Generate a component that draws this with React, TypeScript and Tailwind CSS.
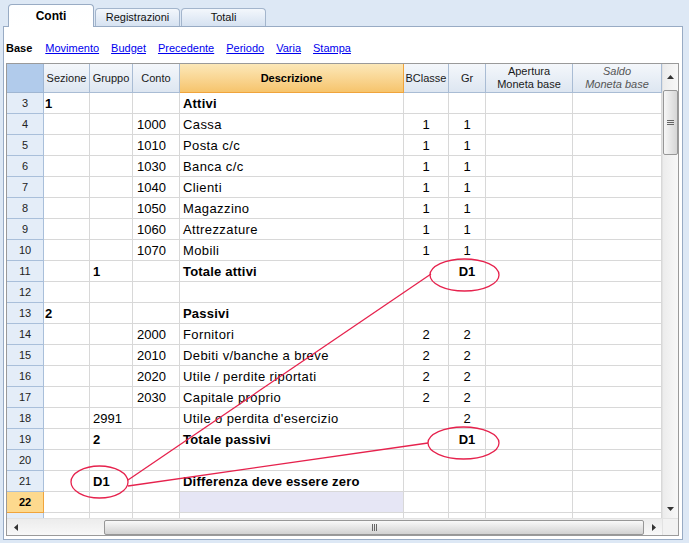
import React from 'react';

type Row = {
  n: number;
  sez?: string;
  gru?: string;
  con?: string;
  desc?: string;
  bcl?: string;
  gr?: string;
  bold?: boolean;
  gruBold?: boolean;
  grBold?: boolean;
};

const ROWS: Row[] = [
  { n: 3, sez: '1', desc: 'Attivi', bold: true },
  { n: 4, con: '1000', desc: 'Cassa', bcl: '1', gr: '1' },
  { n: 5, con: '1010', desc: 'Posta c/c', bcl: '1', gr: '1' },
  { n: 6, con: '1030', desc: 'Banca c/c', bcl: '1', gr: '1' },
  { n: 7, con: '1040', desc: 'Clienti', bcl: '1', gr: '1' },
  { n: 8, con: '1050', desc: 'Magazzino', bcl: '1', gr: '1' },
  { n: 9, con: '1060', desc: 'Attrezzature', bcl: '1', gr: '1' },
  { n: 10, con: '1070', desc: 'Mobili', bcl: '1', gr: '1' },
  { n: 11, gru: '1', desc: 'Totale attivi', gr: 'D1', bold: true, gruBold: true, grBold: true },
  { n: 12 },
  { n: 13, sez: '2', desc: 'Passivi', bold: true },
  { n: 14, con: '2000', desc: 'Fornitori', bcl: '2', gr: '2' },
  { n: 15, con: '2010', desc: 'Debiti v/banche a breve', bcl: '2', gr: '2' },
  { n: 16, con: '2020', desc: 'Utile / perdite riportati', bcl: '2', gr: '2' },
  { n: 17, con: '2030', desc: 'Capitale proprio', bcl: '2', gr: '2' },
  { n: 18, gru: '2991', desc: "Utile o perdita d'esercizio", gr: '2' },
  { n: 19, gru: '2', desc: 'Totale passivi', gr: 'D1', bold: true, gruBold: true, grBold: true },
  { n: 20 },
  { n: 21, gru: 'D1', desc: 'Differenza deve essere zero', bold: true, gruBold: true },
  { n: 22 },
];

const COLS = 'grid grid-cols-[37px_46px_43px_47px_224px_45px_37px_87px_89px]';
const cell = 'border-r border-b border-[#d8d8d8] flex items-center h-[21px] pt-px text-[13px] text-black';

function Tab({ label, active }: { label: string; active?: boolean }) {
  if (active) {
    return (
      <div className="relative z-10 -mb-px w-[86px] h-[23px] rounded-t-[4px] border border-b-0 border-[#98abc4] bg-gradient-to-b from-[#fdfeff] to-white flex items-center justify-center text-[12px] font-bold text-black pb-px">
        {label}
      </div>
    );
  }
  return (
    <div className="w-[85px] h-[18px] rounded-t-[4px] border border-b-0 border-[#a3b5cc] bg-gradient-to-b from-[#f3f7fc] to-[#d6e2f1] flex items-center justify-center text-[11px] text-[#111]">
      {label}
    </div>
  );
}

function HeadCell({ children, className = '' }: { children?: React.ReactNode; className?: string }) {
  return (
    <div
      className={`h-[29px] border-r border-b border-[#a9bcd4] bg-gradient-to-b from-[#f4f7fb] to-[#dde6f1] flex flex-col items-center justify-center text-[11px] leading-[13px] text-[#1a1a1a] ${className}`}
    >
      {children}
    </div>
  );
}

export default function App() {
  return (
    <div className="relative w-[689px] h-[543px] overflow-hidden bg-[#dde8f5] font-['Liberation_Sans',Arial,sans-serif]">
      {/* Tabs */}
      <div className="flex items-end gap-[1px] h-[26px] pl-[8px]">
        <Tab label="Conti" active />
        <Tab label="Registrazioni" />
        <Tab label="Totali" />
      </div>

      {/* Panel */}
      <div className="ml-[3px] w-[680px] h-[514px] border border-[#98abc4] bg-white">
        {/* Link row */}
        <div className="h-[36px] flex items-center gap-3 pl-[2px] pt-[6px] text-[11px]">
          <span className="font-bold text-black mr-px">Base</span>
          {['Movimento', 'Budget', 'Precedente', 'Periodo', 'Varia', 'Stampa'].map((l) => (
            <span key={l} className="text-[#0000ee] underline">
              {l}
            </span>
          ))}
        </div>

        {/* Grid */}
        <div className="ml-[2px] w-[673px] h-[473px] border border-[#9a9a9a] flex flex-col">
          <div className="flex h-[454px]">
            <div className="w-[655px] overflow-hidden">
              {/* Header */}
              <div className={COLS}>
                <div className="h-[29px] border-r border-b border-[#9fb6d2] bg-[#b1cbeb]" />
                <HeadCell>Sezione</HeadCell>
                <HeadCell>Gruppo</HeadCell>
                <HeadCell>Conto</HeadCell>
                <div className="h-[29px] border-r border-b border-[#f0a43c] bg-gradient-to-b from-[#fce8b8] to-[#f6c46c] flex items-center justify-center text-[11px] font-bold text-black">
                  Descrizione
                </div>
                <HeadCell>BClasse</HeadCell>
                <HeadCell>Gr</HeadCell>
                <HeadCell>
                  <span>Apertura</span>
                  <span>Moneta base</span>
                </HeadCell>
                <HeadCell className="italic text-[#555]">
                  <span>Saldo</span>
                  <span>Moneta base</span>
                </HeadCell>
              </div>

              {/* Rows */}
              {ROWS.map((r) => {
                const last = r.n === 22;
                return (
                  <div key={r.n} className={COLS}>
                    <div
                      className={
                        last
                          ? 'h-[21px] border-r border-b border-[#f0a43c] bg-[#fdd98e] flex items-center justify-center text-[11px] font-bold text-black'
                          : 'h-[21px] border-r border-b border-[#a9bfda] bg-[#e4edf8] flex items-center justify-center text-[11px] text-[#222]'
                      }
                    >
                      {r.n}
                    </div>
                    <div className={`${cell} pl-[1px] font-bold`}>{r.sez}</div>
                    <div className={`${cell} pl-[3px] ${r.gruBold ? 'font-bold' : ''}`}>{r.gru}</div>
                    <div className={`${cell} pl-[4px]`}>{r.con}</div>
                    <div
                      className={`${cell} pl-[3px] ${r.bold ? 'font-bold tracking-[0.2px]' : 'tracking-[0.4px]'} ${last ? 'bg-[#e6e6f5]' : ''}`}
                    >
                      {r.desc}
                    </div>
                    <div className={`${cell} justify-center`}>{r.bcl}</div>
                    <div className={`${cell} justify-center ${r.grBold ? 'font-bold' : ''}`}>{r.gr}</div>
                    <div className={cell} />
                    <div className={cell} />
                  </div>
                );
              })}
              {/* partial row */}
              <div className={COLS}>
                <div className="h-[5px] border-r border-[#a9bfda] bg-[#e4edf8]" />
                {Array.from({ length: 8 }).map((_, i) => (
                  <div key={i} className="h-[5px] border-r border-[#d8d8d8]" />
                ))}
              </div>
            </div>

            {/* Vertical scrollbar */}
            <div className="w-[16px] flex flex-col items-center bg-gradient-to-r from-[#ececec] to-[#f8f8f8] border-l border-[#e2e2e2]">
              <div className="h-[26px] flex items-center justify-center">
                <svg width="7" height="4" viewBox="0 0 7 4">
                  <polygon points="0,4 7,4 3.5,0" fill="#333" />
                </svg>
              </div>
              <div className="w-[15px] h-[65px] rounded-[2px] border border-[#979797] bg-gradient-to-r from-[#f7f7f7] to-[#d6d6d6] flex flex-col items-center justify-center gap-[1px]">
                <div className="w-[7px] h-px bg-[#666]" />
                <div className="w-[7px] h-px bg-[#666]" />
                <div className="w-[7px] h-px bg-[#666]" />
              </div>
              <div className="flex-1" />
              <div className="h-[18px] flex items-center justify-center">
                <svg width="7" height="4" viewBox="0 0 7 4">
                  <polygon points="0,0 7,0 3.5,4" fill="#333" />
                </svg>
              </div>
            </div>
          </div>

          {/* Horizontal scrollbar */}
          <div className="flex h-[17px]">
            <div className="w-[655px] flex items-center bg-gradient-to-b from-[#ececec] to-[#f8f8f8] border-t border-[#e2e2e2]">
              <div className="w-[17px] flex items-center justify-center">
                <svg width="4" height="7" viewBox="0 0 4 7">
                  <polygon points="4,0 4,7 0,3.5" fill="#333" />
                </svg>
              </div>
              <div className="w-[80px]" />
              <div className="w-[540px] h-[15px] rounded-[2px] border border-[#979797] bg-gradient-to-b from-[#f9f9f9] to-[#d2d2d2] flex items-center justify-center gap-[1px]">
                <div className="w-px h-[7px] bg-[#666]" />
                <div className="w-px h-[7px] bg-[#666]" />
                <div className="w-px h-[7px] bg-[#666]" />
              </div>
              <div className="flex-1" />
              <div className="w-[17px] flex items-center justify-center">
                <svg width="4" height="7" viewBox="0 0 4 7">
                  <polygon points="0,0 0,7 4,3.5" fill="#333" />
                </svg>
              </div>
            </div>
            <div className="w-[16px] bg-[#f2f2f2] border-t border-l border-[#e2e2e2]" />
          </div>
        </div>
      </div>

      {/* Annotations */}
      <svg className="absolute inset-0 pointer-events-none" width="689" height="543" viewBox="0 0 689 543">
        <g fill="none" stroke="#e6224d" strokeWidth="1.3">
          <ellipse cx="464.5" cy="275" rx="34.5" ry="16" />
          <ellipse cx="463.5" cy="443" rx="35.5" ry="16" />
          <ellipse cx="99.5" cy="482" rx="28.5" ry="16" />
          <line x1="128" y1="480" x2="431" y2="274" />
          <line x1="128" y1="486" x2="428" y2="443" />
        </g>
      </svg>
    </div>
  );
}
